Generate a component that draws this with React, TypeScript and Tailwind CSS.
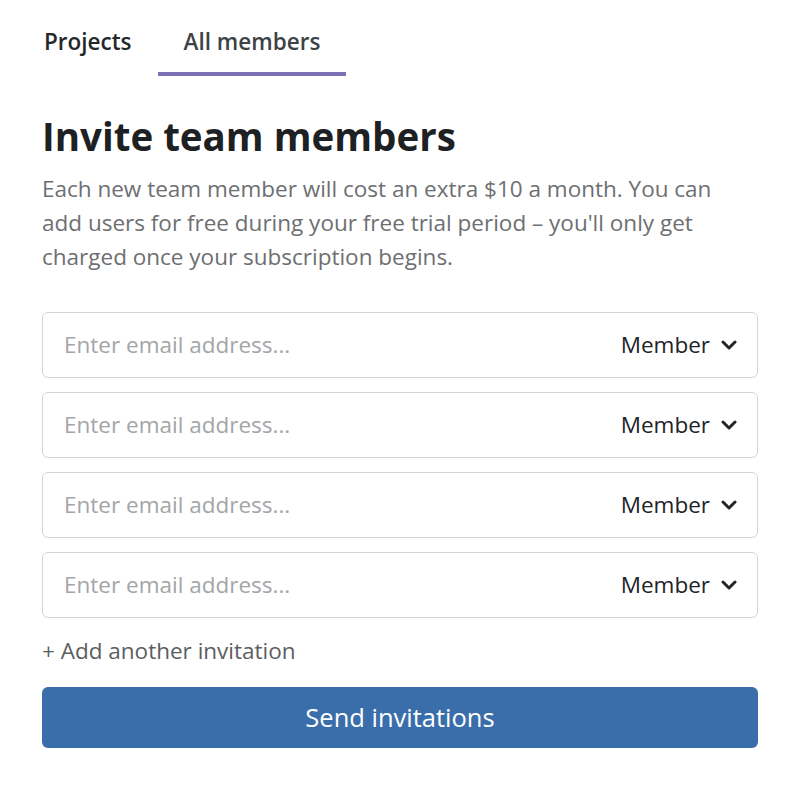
const rows = [0, 1, 2, 3];

const Chevron = () => (
  <svg width="16" height="10" viewBox="0 0 16 10" className="ml-[11px]" fill="none">
    <polyline points="2,2 8,8 14,2" stroke="#222427" strokeWidth="3" strokeLinecap="round" strokeLinejoin="round" />
  </svg>
);

export default function App() {
  return (
    <div className="w-[800px] h-[787px] bg-white font-['Open_Sans',sans-serif] px-[42px]">
      {/* Tabs */}
      <div className="flex items-end h-[76px]">
        <div className="pl-[2px] pr-[26px] pb-[17px] text-[22.5px] font-semibold text-[#25282b]">Projects</div>
        <div className="px-[26px] pb-[13px] border-b-4 border-[#7b70b3] text-[22.5px] font-semibold text-[#3d4246]">
          All members
        </div>
      </div>

      <h1 className="mt-[36px] text-[38.5px] font-bold leading-[48px] text-[#1e2124]">Invite team members</h1>
      <p className="mt-[12px] max-w-[700px] text-[22.5px] leading-[34px] text-[#6d6f72]">
        Each new team member will cost an extra $10 a month. You can add users for free during your free trial
        period – you'll only get charged once your subscription begins.
      </p>

      <div className="mt-[38px] flex flex-col gap-[14px]">
        {rows.map(i => (
          <div
            key={i}
            className="h-[66px] flex items-center border border-[#d4d4d4] rounded-[6px] pl-[21px] pr-[20px]"
          >
            <span className="flex-1 text-[22.5px] text-[#a3a5a7]">Enter email address...</span>
            <span className="text-[22.5px] text-[#222427]">Member</span>
            <Chevron />
          </div>
        ))}
      </div>

      <div className="mt-[18px] text-[22.5px] leading-[30px] text-[#5b5e61]">+ Add another invitation</div>

      <button className="mt-[21px] w-full h-[61px] rounded-[6px] bg-[#3a6eab] text-white text-[25.5px]">
        Send invitations
      </button>
    </div>
  );
}
